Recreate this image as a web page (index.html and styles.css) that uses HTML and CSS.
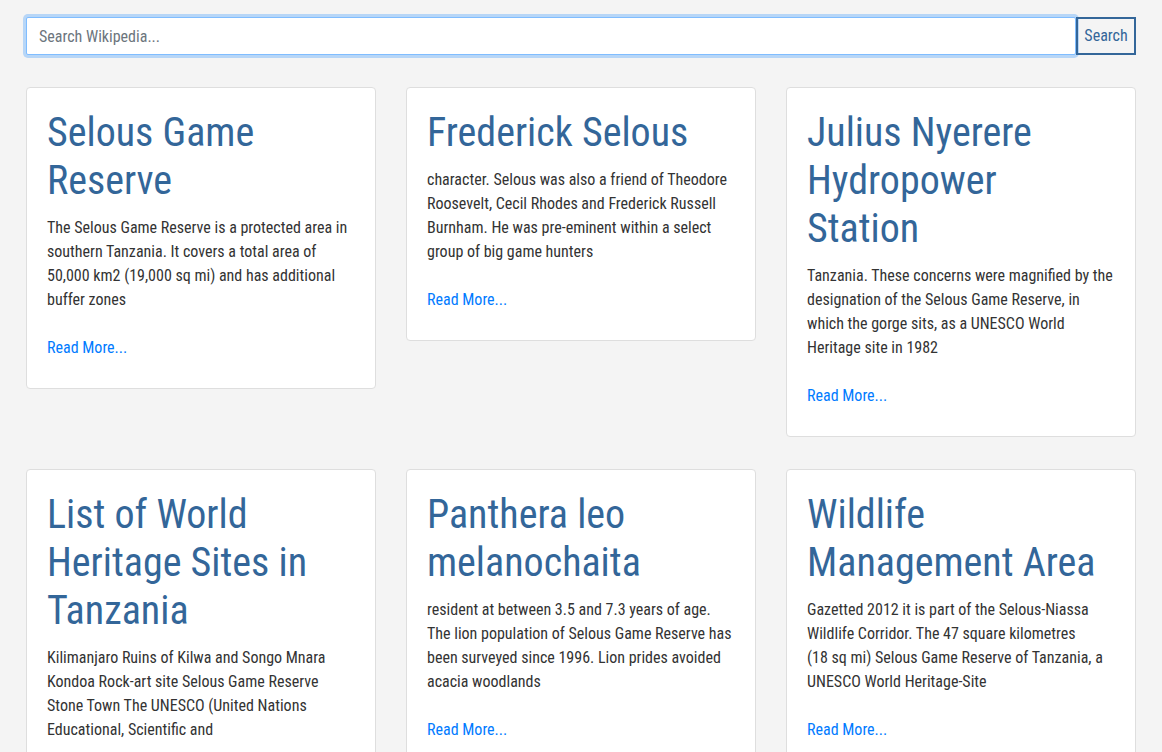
FILE: index.html
```html
<!DOCTYPE html>
<html lang="en">
<head>
<meta charset="utf-8">
<title>Wikipedia Search</title>
<link rel="stylesheet" href="styles.css">
</head>
<body>
<div class="container">
  <form class="search">
    <input class="search-input" type="text" placeholder="Search Wikipedia...">
    <button class="search-btn" type="button">Search</button>
  </form>
  <div class="results">
    <div class="card">
      <h1 class="card-title">Selous Game Reserve</h1>
      <p class="card-text">The Selous Game Reserve is a protected area in southern Tanzania. It covers a total area of 50,000 km2 (19,000 sq mi) and has additional buffer zones</p>
      <a class="more" href="#">Read More...</a>
    </div>
    <div class="card">
      <h1 class="card-title">Frederick Selous</h1>
      <p class="card-text">character. Selous was also a friend of Theodore Roosevelt, Cecil Rhodes and Frederick Russell Burnham. He was pre-eminent within a select group of big game hunters</p>
      <a class="more" href="#">Read More...</a>
    </div>
    <div class="card">
      <h1 class="card-title">Julius Nyerere Hydropower Station</h1>
      <p class="card-text">Tanzania. These concerns were magnified by the designation of the Selous Game Reserve, in which the gorge sits, as a UNESCO World Heritage site in 1982</p>
      <a class="more" href="#">Read More...</a>
    </div>
    <div class="card">
      <h1 class="card-title">List of World Heritage Sites in Tanzania</h1>
      <p class="card-text">Kilimanjaro Ruins of Kilwa and Songo Mnara Kondoa Rock-art site Selous Game Reserve Stone Town The UNESCO (United Nations Educational, Scientific and</p>
      <a class="more" href="#">Read More...</a>
    </div>
    <div class="card">
      <h1 class="card-title">Panthera leo melanochaita</h1>
      <p class="card-text">resident at between 3.5 and 7.3 years of age. The lion population of Selous Game Reserve has been surveyed since 1996. Lion prides avoided acacia woodlands</p>
      <a class="more" href="#">Read More...</a>
    </div>
    <div class="card">
      <h1 class="card-title">Wildlife Management Area</h1>
      <p class="card-text">Gazetted 2012 it is part of the Selous-Niassa Wildlife Corridor. The 47 square kilometres (18&nbsp;sq&nbsp;mi) Selous Game Reserve of Tanzania, a UNESCO World Heritage-Site</p>
      <a class="more" href="#">Read More...</a>
    </div>
  </div>
</div>
</body>
</html>
```

FILE: styles.css
```css
* { box-sizing: border-box; }
html, body { margin: 0; padding: 0; }
body {
  background: #f4f4f4;
  font-family: "Roboto Condensed", Roboto, "Liberation Sans Narrow", sans-serif;
  font-stretch: condensed;
  color: #333;
  font-size: 16px;
  line-height: 1.5;
}
.container {
  width: 1110px;
  margin: 0 auto;
  padding-top: 17px;
}
.search {
  display: flex;
  height: 38px;
  margin: 0 0 32px;
}
.search-input {
  flex: 1;
  height: 38px;
  border: 1px solid #80bdff;
  border-radius: 2px;
  box-shadow: 0 0 0 3px rgba(0, 123, 255, 0.25);
  padding: 0 12px;
  font: inherit;
  font-stretch: condensed;
  color: #495057;
  outline: none;
  background: #fff;
}
.search-input::placeholder { color: #6c757d; }
.search-btn {
  width: 60px;
  height: 38px;
  border: 2px solid #336699;
  background: transparent;
  color: #336699;
  font: inherit;
  font-stretch: condensed;
  padding: 0;
}
.results {
  display: grid;
  grid-template-columns: repeat(3, 350px);
  column-gap: 30px;
  row-gap: 32px;
  align-items: start;
}
.card {
  background: #fff;
  border: 1px solid #dedede;
  border-radius: 4px;
  padding: 21px 20px 28px;
}
.card-title {
  margin: 0 0 11px;
  font-size: 40px;
  font-weight: 400;
  line-height: 48px;
  color: #336699;
}
.card-text {
  margin: 0 0 24px;
  line-height: 24px;
  font-size: 16px;
}
.more {
  display: block;
  color: #007bff;
  text-decoration: none;
  line-height: 24px;
}
```
